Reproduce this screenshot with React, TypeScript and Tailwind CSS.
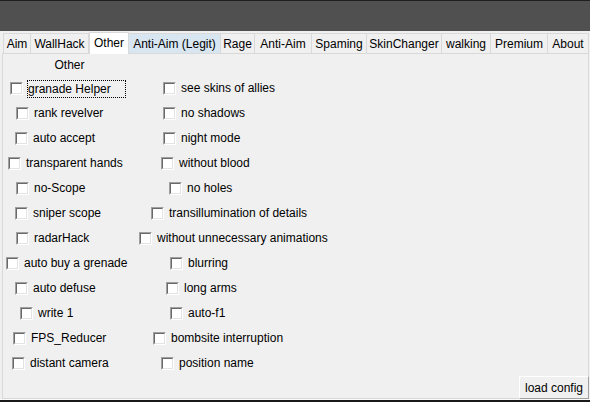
import React from "react";

type Item = { label: string; pl: string };

const rows: [Item, Item][] = [
  [{ label: "granade Helper", pl: "pl-[7px]" }, { label: "see skins of allies", pl: "pl-[24px]" }],
  [{ label: "rank revelver", pl: "pl-[13px]" }, { label: "no shadows", pl: "pl-[24px]" }],
  [{ label: "auto accept", pl: "pl-[12px]" }, { label: "night mode", pl: "pl-[24px]" }],
  [{ label: "transparent hands", pl: "pl-[5px]" }, { label: "without blood", pl: "pl-[22px]" }],
  [{ label: "no-Scope", pl: "pl-[13px]" }, { label: "no holes", pl: "pl-[30px]" }],
  [{ label: "sniper scope", pl: "pl-[12px]" }, { label: "transillumination of details", pl: "pl-[12px]" }],
  [{ label: "radarHack", pl: "pl-[13px]" }, { label: "without unnecessary animations", pl: "pl-[0px]" }],
  [{ label: "auto buy a grenade", pl: "pl-[3px]" }, { label: "blurring", pl: "pl-[31px]" }],
  [{ label: "auto defuse", pl: "pl-[12px]" }, { label: "long arms", pl: "pl-[27px]" }],
  [{ label: "write 1", pl: "pl-[17px]" }, { label: "auto-f1", pl: "pl-[31px]" }],
  [{ label: "FPS_Reducer", pl: "pl-[10px]" }, { label: "bombsite interruption", pl: "pl-[14px]" }],
  [{ label: "distant camera", pl: "pl-[9px]" }, { label: "position name", pl: "pl-[22px]" }],
];

const tabs: { label: string; w: string; state: "normal" | "selected" | "hover" }[] = [
  { label: "Aim", w: "w-[28px]", state: "normal" },
  { label: "WallHack", w: "w-[58px]", state: "normal" },
  { label: "Other", w: "w-[40px]", state: "selected" },
  { label: "Anti-Aim (Legit)", w: "w-[92px]", state: "hover" },
  { label: "Rage", w: "w-[34px]", state: "normal" },
  { label: "Anti-Aim", w: "w-[57px]", state: "normal" },
  { label: "Spaming", w: "w-[55px]", state: "normal" },
  { label: "SkinChanger", w: "w-[75px]", state: "normal" },
  { label: "walking", w: "w-[49px]", state: "normal" },
  { label: "Premium", w: "w-[57px]", state: "normal" },
  { label: "About", w: "w-[41px]", state: "normal" },
];

function CheckBox() {
  return (
    <div className="w-[13px] h-[13px] shrink-0 border border-t-[#a0a0a0] border-l-[#a0a0a0] border-b-white border-r-white">
      <div className="w-full h-full bg-white border border-t-[#696969] border-l-[#696969] border-b-[#e3e3e3] border-r-[#e3e3e3]" />
    </div>
  );
}

function Check({ item, focus }: { item: Item; focus?: boolean }) {
  return (
    <div className={`flex items-center h-full ${item.pl}`}>
      <CheckBox />
      {focus ? (
        <span className="ml-[4px] h-[18px] w-[99px] border border-dotted border-black leading-[16px] whitespace-nowrap">
          {item.label}
        </span>
      ) : (
        <span className="ml-[5px] whitespace-nowrap leading-[15px]">{item.label}</span>
      )}
    </div>
  );
}

export default function App() {
  return (
    <div
      className="w-[590px] h-[402px] overflow-hidden bg-[#f0f0f0] text-black text-[12px] flex flex-col"
      style={{ fontFamily: '"Liberation Sans", Arial, sans-serif' }}
    >
      <div className="h-[31px] shrink-0 bg-[#505050] border-t border-t-[#1e1e1e]" />
      <div className="h-[22px] shrink-0 flex items-end pl-[3px]">
        {tabs.map((t, i) => {
          if (t.state === "selected") {
            return (
              <div
                key={i}
                className={`${t.w} h-[22px] bg-white border-t border-l border-r border-[#d9d9d9] flex items-center justify-center relative z-10 -mb-px pb-[2px]`}
              >
                {t.label}
              </div>
            );
          }
          const bg = t.state === "hover" ? "bg-[#d8e6f2]" : "bg-[#f0f0f0]";
          return (
            <div
              key={i}
              className={`${t.w} h-[20px] ${bg} border-t border-r border-[#d9d9d9] ${i === 0 ? "border-l" : ""} flex items-center justify-center whitespace-nowrap`}
            >
              {t.label}
            </div>
          );
        })}
      </div>
      <div className="ml-[2px] w-[587px] h-[346px] shrink-0 border border-[#d9d9d9] bg-[#f0f0f0] flex flex-col">
        <div className="pt-[2px] h-[20px] pl-[48px]">
          <div className="h-[18px] leading-[18px] w-[37px] text-center">Other</div>
        </div>
        <div className="mt-[2px] flex flex-col">
          {rows.map((r, i) => (
            <div key={i} className="h-[25px] flex">
              <div className="w-[136px] shrink-0 h-full">
                <Check item={r[0]} focus={i === 0} />
              </div>
              <div className="flex-1 h-full">
                <Check item={r[1]} />
              </div>
            </div>
          ))}
        </div>
        <div className="flex justify-end -mr-[1px]">
          <button className="w-[70px] h-[23px] bg-[#f0f0f0] border border-t-white border-l-white border-b-[#a0a0a0] border-r-[#a0a0a0] flex items-center justify-center leading-none">
            load config
          </button>
        </div>
      </div>
      <div className="h-px bg-[#fafafa] shrink-0" />
      <div className="flex-1 bg-[#1a1a1a]" />
    </div>
  );
}
